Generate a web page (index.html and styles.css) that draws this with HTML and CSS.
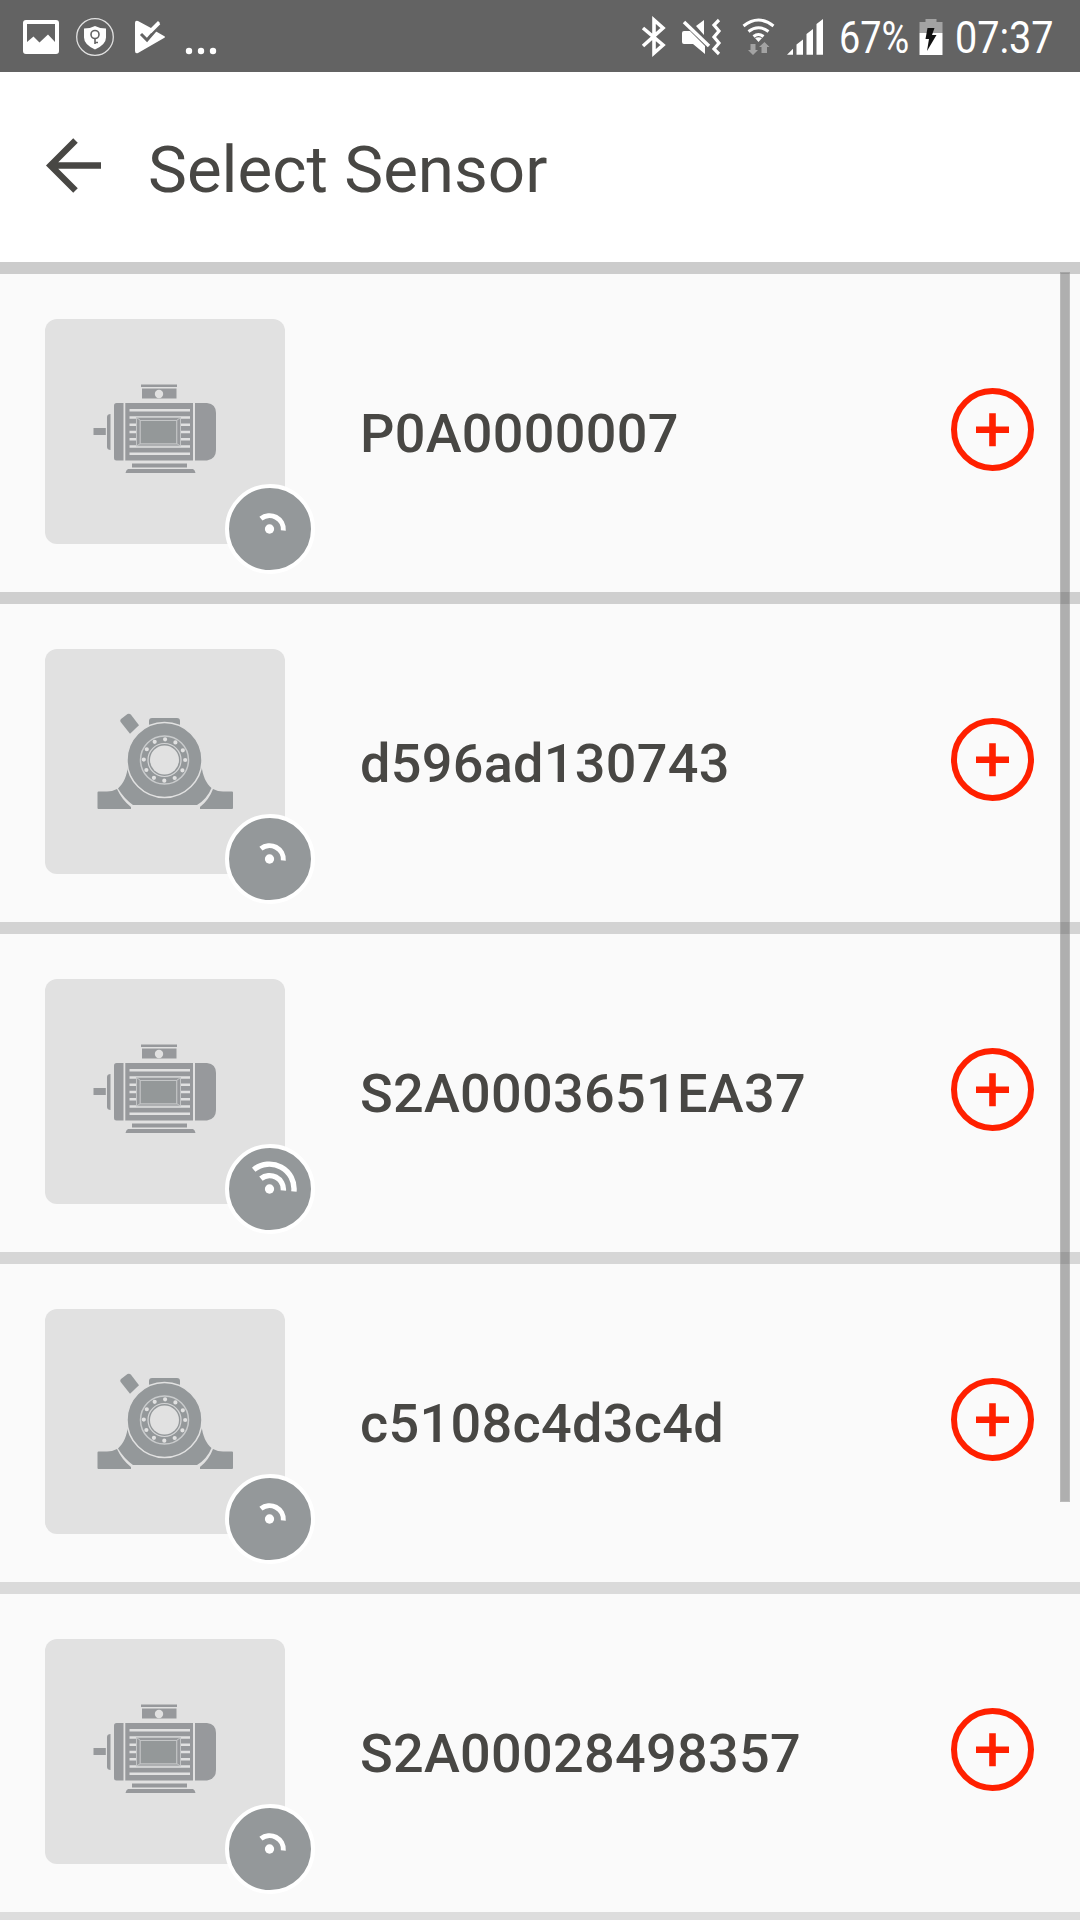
FILE: index.html
```html
<!DOCTYPE html>
<html lang="en">
<head>
    <meta charset="UTF-8"/>
    <meta name="viewport" content="width=device-width, initial-scale=1.0"/>
    <title>Select Sensor</title>
    <link rel="stylesheet" href="styles.css">
</head>
<body>
<!-- Shared icons -->
<svg class="sprite" width="0" height="0">
    <symbol id="motor" viewBox="0 0 150 120">
        <g fill="#97999c">
            <path d="M61 14.6h36v2.4H61zM62 18.6h34.5v10H62z"/>
            <rect x="13.5" y="58" width="12.3" height="7"/>
            <path d="M30.5 44v36c-2 0-3.5-1-3.5-3V47c0-2 1.500-3 3.500-3z"/>
            <path d="M36.500 33h7v57.500h-7q-2.500 0-2.500-2.500V35.500q0-2.500 2.500-2.500z"/>
            <path d="M45.300 33H113v57.500H45.300z"/>
            <path d="M115 33h12q9 1 9 10v37q0 9-9 10.500h-12z"/>
            <path d="M52 93.500h55v4H52zM48 99h65q2 1 2.500 4h-70q.5-3 2.500-4z"/>
        </g>
        <circle cx="79" cy="24" r="4.200" fill="#e1e1e1"/>
        <path d="M49.500 40.300h60.500M49.500 47.500h60.500M49.500 54.800h60.500M49.500 62h60.500M49.500 69.300h60.500M49.500 76.500h60.500M49.500 83.800h60.500" stroke="#e1e1e1" stroke-width="2.500"/>
        <path d="M56.500 47.500h44v28.500h-44z" fill="#97999c" stroke="#c3c5c6" stroke-width="1"/>
        <path d="M60.200 50.500h36.500v23.300H60.200z" fill="#949899" stroke="#c3c5c6" stroke-width="1.200"/>
        <path d="M56.500 47.500l4 3M100.500 47.500l-4 3M56.500 76l4-2.500M100.500 76l-4-2.500" stroke="#c3c5c6" stroke-width="1"/>
    </symbol>
    <symbol id="bearing" viewBox="0 0 170 130">
        <g fill="#94989a">
            <path d="M41 24l6.500-5q2-1 3.500.8l8 10.500-9 8.500-9.500-12q-.8-1.500.5-2.800z"/>
            <path d="M69 30v-4q0-3 3-3h25q3 0 3 3v4z"/>
            <path d="M48 70c-1 11-4 18-10 23.500q6 10 15 16.500h64q10-6 14.500-17c-5-4-9-12-10-23z"/>
            <path d="M18.500 96.500H27q5 0 10-2.500 5 11 14 18v2H18.500q-1 0-1-1v-15.500q0-1 1-1z"/>
            <path d="M152 96.500h-9q-5 0-10-2.500-4 11-13 18v2h32q1 0 1-1v-15.500q0-1-1-1z"/>
        </g>
        <circle cx="84.500" cy="65" r="37.500" fill="#94989a" stroke="#e1e1e1" stroke-width="1.500"/>
        <circle cx="84.500" cy="65" r="24" fill="#94989a" stroke="#c9cbcc" stroke-width="1.500"/>
        <circle cx="84.500" cy="65" r="20.700" fill="none" stroke="#e1e1e1" stroke-width="4.200" stroke-linecap="round" stroke-dasharray="0 10.838"/>
        <circle cx="84.500" cy="65" r="16.500" fill="#94989a" stroke="#d5d6d7" stroke-width="1.200"/>
        <circle cx="84.500" cy="65" r="14.500" fill="#e1e1e1"/>
    </symbol>
    <symbol id="signal-low" viewBox="0 0 83 83">
        <circle cx="41" cy="41.500" r="4.700"/>
        <path d="M32.300 31A14 14 0 0 1 55 43" fill="none" stroke="#fff" stroke-width="5"/>
    </symbol>
    <symbol id="signal-high" viewBox="0 0 83 83">
        <circle cx="41" cy="41.500" r="4.700"/>
        <path d="M32.300 31A14 14 0 0 1 55 43M25 22A25 25 0 0 1 65.700 44" fill="none" stroke="#fff" stroke-width="5.500"/>
    </symbol>
    <symbol id="add" viewBox="0 0 83 83">
        <circle cx="41.500" cy="41.500" r="38.500" fill="none" stroke="#ff2000" stroke-width="6"/>
        <path d="M25 41.700h33M41.500 25.200v33" stroke="#ff2000" stroke-width="6.600"/>
    </symbol>
</svg>

<div class="status-bar">
    <svg class="status-left" width="240" height="72" viewBox="0 0 240 72" fill="#fff">
        <path fill-rule="evenodd" d="M26 20h30q3 0 3 3v28q0 3-3 3H26q-3 0-3-3V23q0-3 3-3zM27 24v18l6.500-5.500 6 6 8.500-8 7 7.500V24z"/>
        <circle cx="95" cy="37" r="18.300" fill="none" stroke="#e0e0e0" stroke-width="1.300"/>
        <path d="M95 26q5 2.500 11 2.500v9q0 7-11 12-11-5-11-12v-9q6 0 11-2.500z"/>
        <circle cx="95" cy="34.500" r="4" fill="none" stroke="#636363" stroke-width="1.600"/>
        <path d="M95 38.500V44M95 42.500h3" stroke="#636363" stroke-width="1.600"/>
        <path d="M135 23q0-3 3-2l13 7 7-7 2 2-7 7 4 2 7 4q2 1 0 2l-26 15q-3 1-3-2z"/>
        <path d="M141 34l6 6 13-15" fill="none" stroke="#636363" stroke-width="3"/>
        <path d="M150 32l9-9" stroke="#fff" stroke-width="3.500"/>
        <circle cx="189" cy="51" r="3.200"/>
        <circle cx="201" cy="51" r="3.200"/>
        <circle cx="213" cy="51" r="3.200"/>
    </svg>
    <div class="status-right">
        <svg width="190" height="72" viewBox="635 0 190 72" fill="#fff">
            <path d="M643 28l20 17-9 8V20l9 8-20 18" fill="none" stroke="#fff" stroke-width="3.600"/>
            <path d="M682 33q0-2 2-2h6l15 15v8l-12-10h-9q-2 0-2-2zM696 26l8-6v15z"/>
            <path d="M684 22l25 24" stroke="#fff" stroke-width="3.500"/>
            <path d="M719 20l-5 5 5 6-5 6 5 6-5 6 5 5" fill="none" stroke="#fff" stroke-width="3.200"/>
            <g fill="none" stroke="#fff" stroke-width="3">
                <path d="M743.500 26q15-12 30 0M748.500 31.500q10-7.500 20 0M753.500 36.500q5-4 10 0"/>
            </g>
            <path d="M755 38q3.500-1.500 7 0l-3.500 4z"/>
            <path d="M750.500 44h5v6h2.500l-5 5-5-5h2.500zM761.500 53v-6H759l5.500-5 5 5H767v6z" fill="#a3a3a3"/>
            <path d="M787 54.800l6-6v6zM796.500 54.800V44.500l6.500-5v15.300zM806.500 54.800V34l6.500-5v25.800zM816.500 54.800V24l6.500-5v35.800z"/>
        </svg>
        <div class="battery-text"><span>67%</span></div>
        <svg class="battery" width="24" height="72" viewBox="0 0 24 72">
            <path d="M.5 22h6v-3h11v3h6v11H.5z" fill="#a3a3a3"/>
            <path d="M.5 33h23v22H.5z" fill="#fff"/>
            <path d="M8.500 28h7l-2.500 7h4.500L8 51l2-12H6.500z" fill="#111"/>
        </svg>
        <div class="clock"><span>07:37</span></div>
    </div>
</div>

<header class="header">
    <svg class="back" width="56" height="56" viewBox="0 0 56 56" fill="none" stroke="#484744" stroke-width="6.400">
        <path d="M30.500 3.500L5.500 28.500l25 25M4 28.500h52"/>
    </svg>
    <h1>Select Sensor</h1>
</header>

<main class="sensor-list">
    <div class="sensor">
        <div class="thumb">
            <svg class="device motor"><use href="#motor"/></svg>
            <svg class="signal"><use href="#signal-low"/></svg>
        </div>
        <div class="name">P0A0000007</div>
        <svg class="add"><use href="#add"/></svg>
    </div>
    <div class="sensor">
        <div class="thumb">
            <svg class="device bearing"><use href="#bearing"/></svg>
            <svg class="signal"><use href="#signal-low"/></svg>
        </div>
        <div class="name">d596ad130743</div>
        <svg class="add"><use href="#add"/></svg>
    </div>
    <div class="sensor">
        <div class="thumb">
            <svg class="device motor"><use href="#motor"/></svg>
            <svg class="signal"><use href="#signal-high"/></svg>
        </div>
        <div class="name">S2A0003651EA37</div>
        <svg class="add"><use href="#add"/></svg>
    </div>
    <div class="sensor">
        <div class="thumb">
            <svg class="device bearing"><use href="#bearing"/></svg>
            <svg class="signal"><use href="#signal-low"/></svg>
        </div>
        <div class="name">c5108c4d3c4d</div>
        <svg class="add"><use href="#add"/></svg>
    </div>
    <div class="sensor">
        <div class="thumb">
            <svg class="device motor"><use href="#motor"/></svg>
            <svg class="signal"><use href="#signal-low"/></svg>
        </div>
        <div class="name">S2A00028498357</div>
        <svg class="add"><use href="#add"/></svg>
    </div>
    <div class="scrollbar"></div>
</main>
</body>
</html>
```
FILE: styles.css
```css
* {
    margin: 0;
    padding: 0;
    box-sizing: border-box;
}

body {
    height: 1920px;
    overflow: hidden;
    font-family: Roboto, sans-serif;
    color: #484744;
    background-color: #fafafa;
}

svg {
    display: block;
    flex-shrink: 0;
}

.sprite {
    position: absolute;
}

.status-bar {
    display: flex;
    justify-content: space-between;
    height: 72px;
    padding-right: 26px;
    background-color: #636363;
    color: #fff;
}

.status-right {
    display: flex;
}

.battery-text,
.clock {
    font-size: 44px;
    line-height: 77px;
    white-space: nowrap;
}

.battery-text {
    width: 80px;
    margin-left: 14px;
}

.battery-text span,
.clock span {
    display: inline-block;
    transform: scaleX(0.86);
    transform-origin: left;
}

.clock {
    width: 99px;
    margin-left: 12px;
}

.clock span {
    transform: scaleX(0.9);
}

.header {
    display: flex;
    align-items: center;
    height: 202px;
    padding-left: 45px;
    background-color: #fff;
    border-bottom: 12px solid #ccc;
}

.back {
    margin-right: 47px;
    margin-bottom: 4px;
}

.header h1 {
    font-size: 65.5px;
    font-weight: 400;
    line-height: 76px;
    margin-top: 5px;
}

.sensor-list {
    position: relative;
}

.sensor {
    display: flex;
    align-items: center;
    height: 330px;
    padding: 0 46px 0 45px;
    border-bottom: 12px solid #cfcfcf;
}

.sensor:nth-child(2) {
    border-color: #d3d3d3;
}

.sensor:nth-child(3) {
    border-color: #d6d6d6;
}

.sensor:nth-child(4) {
    border-color: #dadada;
}

.sensor:nth-child(5) {
    border-color: #ddd;
}

.thumb {
    position: relative;
    width: 240px;
    height: 225px;
    margin-bottom: 3px;
    padding: 51px 0 0 35px;
    border-radius: 12px;
    background-color: #e1e1e1;
}

.device.motor {
    width: 150px;
    height: 120px;
}

.device.bearing {
    width: 170px;
    height: 130px;
    margin-top: -5px;
}

/* signal badge hangs over the lower right corner */
.signal {
    position: absolute;
    left: 180px;
    top: 165px;
    width: 90px;
    height: 90px;
    border: 4px solid #fff;
    border-radius: 50%;
    background-color: #94989a;
    fill: #fff;
}

.name {
    flex: 1;
    margin-left: 75px;
    font-size: 54px;
    font-weight: 500;
    letter-spacing: 0.3px;
}

.add {
    width: 83px;
    height: 83px;
    margin-bottom: 7px;
}

.scrollbar {
    position: absolute;
    top: -2px;
    right: 10px;
    width: 10px;
    height: 1230px;
    border: 1px solid rgba(100, 100, 100, 0.05);
    border-color: rgba(255, 255, 255, 0.15);
    background-color: rgba(100, 100, 100, 0.5);
}
```
